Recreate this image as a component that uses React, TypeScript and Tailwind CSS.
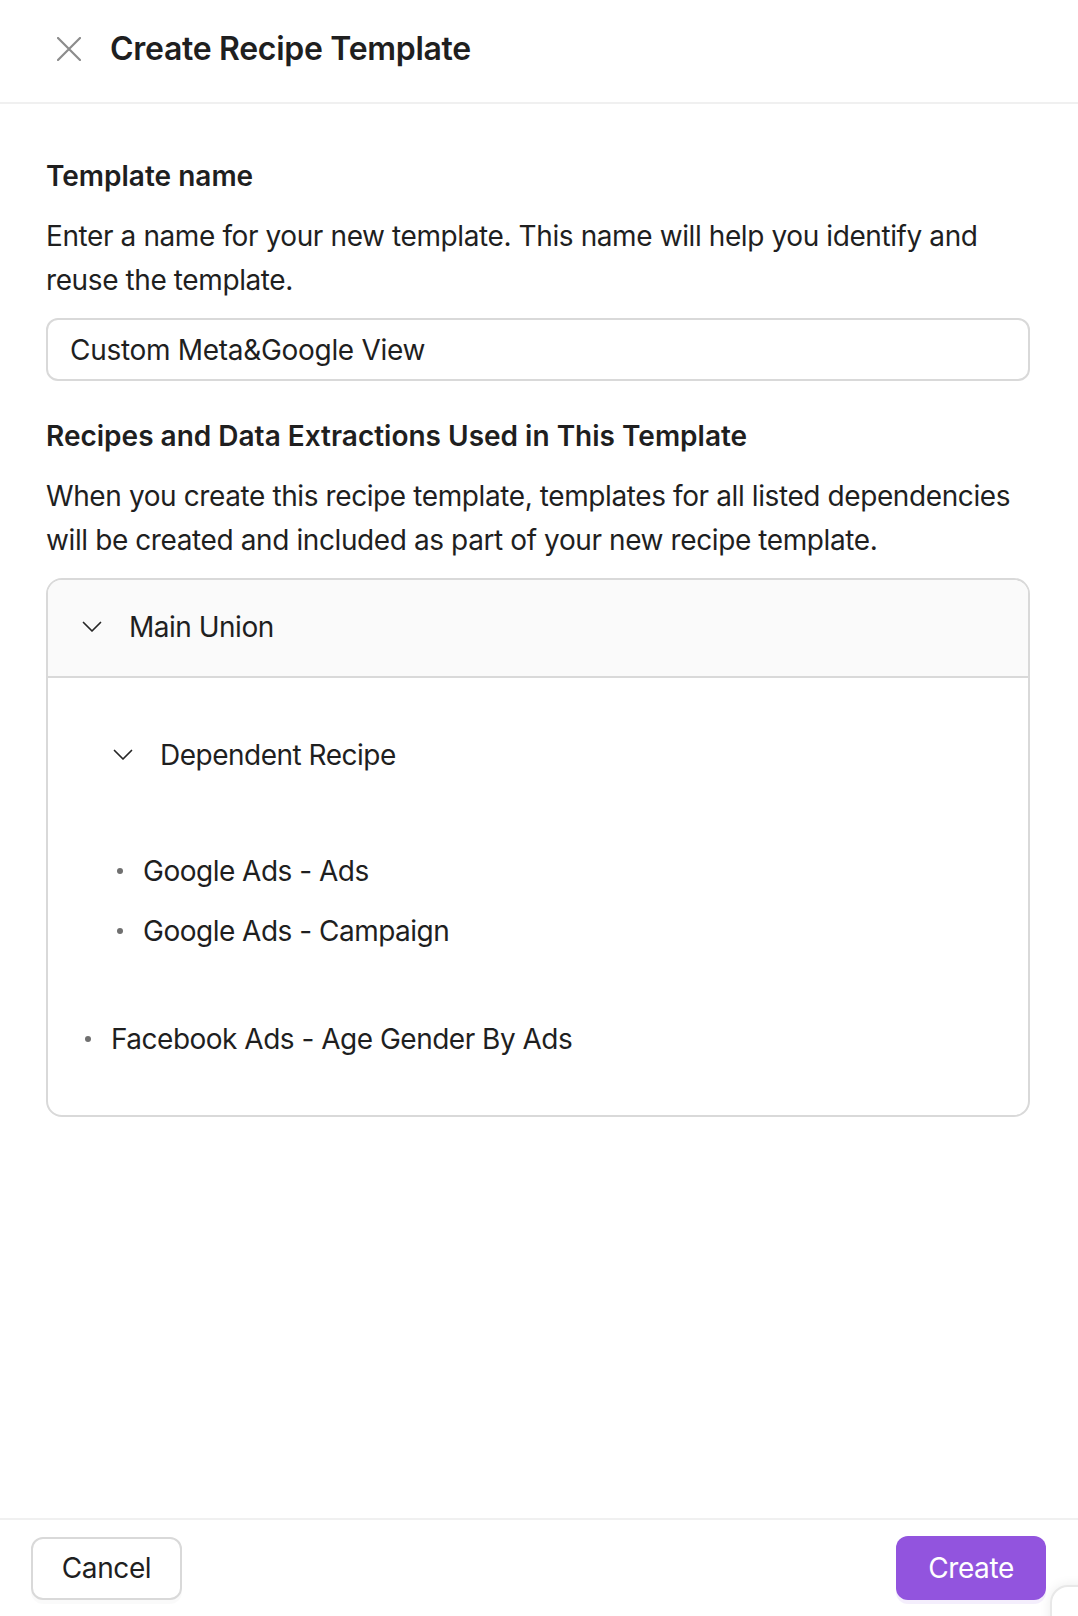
import React from "react";

function Chevron() {
  return (
    <svg width="20" height="12" viewBox="0 0 20 12" fill="none" className="shrink-0">
      <path d="M1.5 1.5L10 10L18.5 1.5" stroke="#262626" strokeWidth="1.7" strokeLinecap="round" strokeLinejoin="round" />
    </svg>
  );
}

function Bullet({ children }: { children: React.ReactNode }) {
  return (
    <li className="flex items-center leading-[44px]">
      <span className="mr-[20px] h-[6px] w-[6px] shrink-0 rounded-full bg-[#707070]" />
      <span>{children}</span>
    </li>
  );
}

export default function App() {
  return (
    <div className="relative flex h-[1616px] w-[1078px] flex-col overflow-hidden bg-white font-['Inter',sans-serif] text-[28px] tracking-[-0.4px] text-[#1f1f1f]">
      {/* header */}
      <div className="flex h-[104px] shrink-0 items-center border-b-2 border-[#f0f0f0] pb-[4px] pl-[57px]">
        <svg width="24" height="24" viewBox="0 0 24 24" fill="none" className="shrink-0">
          <path d="M1 1L23 23M23 1L1 23" stroke="#8c8c8c" strokeWidth="2.2" strokeLinecap="round" />
        </svg>
        <h1 className="ml-[29px] text-[32px] font-semibold leading-[48px] tracking-[-0.3px] text-[#1f1f1f]">Create Recipe Template</h1>
      </div>

      {/* body */}
      <div className="flex-1 pl-[46px] pr-[48px] pt-[50px]">
        <h3 className="font-semibold leading-[44px] tracking-normal">Template name</h3>
        <p className="mt-[16px] leading-[44px]">
          Enter a name for your new template. This name will help you identify and reuse the template.
        </p>
        <div className="mt-[16px] flex h-[63px] items-center rounded-[12px] border-2 border-[#d9d9d9] px-[22px] tracking-[-0.3px]">
          Custom Meta&amp;Google View
        </div>

        <h3 className="mt-[33px] font-semibold leading-[44px] tracking-normal">Recipes and Data Extractions Used in This Template</h3>
        <p className="mt-[16px] leading-[44px]">
          When you create this recipe template, templates for all listed dependencies will be created and included as part of your new recipe template.
        </p>

        <div className="mt-[16px] overflow-hidden rounded-[16px] border-2 border-[#d9d9d9] tracking-[-0.5px]">
          <div className="flex h-[98px] items-center gap-[27px] border-b-2 border-[#d9d9d9] bg-[#fafafa] pb-[3px] pl-[34px]">
            <Chevron />
            <span className="leading-[44px]">Main Union</span>
          </div>
          <div className="pb-[54px] pl-[32px] pt-[55px]">
            <div className="flex items-center gap-[27px] pl-[33px]">
              <Chevron />
              <span className="leading-[44px]">Dependent Recipe</span>
            </div>
            <ul className="mt-[72px] flex flex-col gap-[16px] pl-[37px]">
              <Bullet>Google Ads - Ads</Bullet>
              <Bullet>Google Ads - Campaign</Bullet>
            </ul>
            <ul className="mt-[64px] pl-[5px]">
              <Bullet>Facebook Ads - Age Gender By Ads</Bullet>
            </ul>
          </div>
        </div>
      </div>

      {/* footer */}
      <div className="flex shrink-0 items-center justify-between border-t-2 border-[#f0f0f0] pb-[16px] pl-[31px] pr-[32px] pt-[16px]">
        <button className="h-[63px] w-[151px] rounded-[12px] border-2 border-[#d9d9d9] bg-white text-[28px] text-[#1f1f1f] shadow-[0_4px_0_rgba(0,0,0,0.02)]">
          Cancel
        </button>
        <button className="h-[64px] w-[150px] rounded-[12px] bg-[#9254de] text-[28px] text-white shadow-[0_4px_0_rgba(146,84,222,0.1)]">
          Create
        </button>
      </div>

      {/* floating widget corner */}
      <div className="absolute left-[1050px] top-[1585px] h-[80px] w-[80px] rounded-[18px] border-2 border-[#e8e8e8] bg-white shadow-[0_0_12px_rgba(0,0,0,0.08)]" />
    </div>
  );
}
